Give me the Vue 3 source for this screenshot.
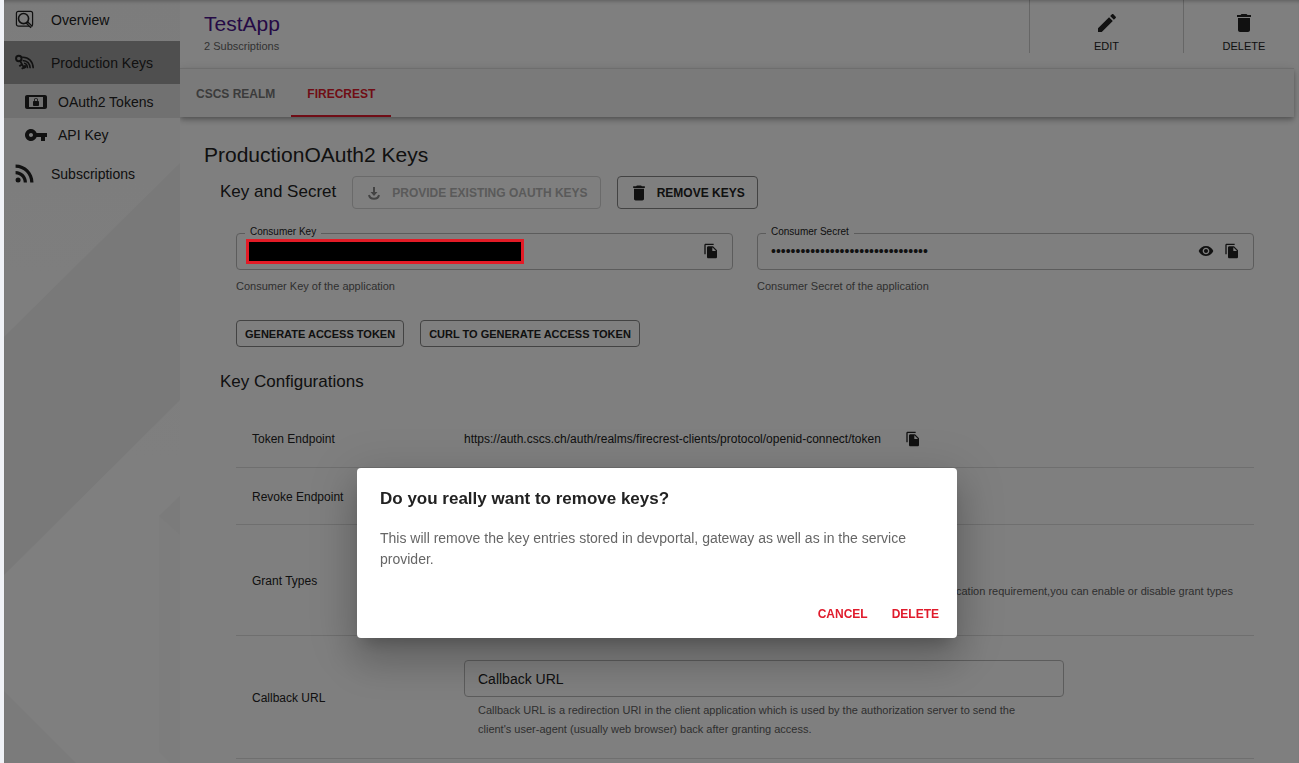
<script setup>
import { ref } from 'vue'

const secret = ref('x'.repeat(32))
const consumerKey = ref('')
const callback = ref('')

const copyPath =
  'M16 1H4c-1.100 0-2 .9-2 2v14h2V3h12V1zm-1 4l6 6v10c0 1.100-.9 2-2 2H7.990C6.890 23 6 22.100 6 21l.01-14c0-1.100.89-2 1.990-2h7zm-1 7h5.500L14 6.500V12z'
const trashPath = 'M6 19c0 1.100.9 2 2 2h8c1.100 0 2-.9 2-2V7H6v12zM19 4h-3.500l-1-1h-5l-1 1H5v2h14V4z'
</script>

<template>
  <div class="page">
    <aside class="sidebar">
      <svg class="pattern" width="176" height="763" viewBox="0 0 176 763" aria-hidden="true">
        <polygon points="176,163 0,337 0,575 176,400" fill="#f2f2f2" />
        <polygon points="176,496 155,516 155,752 176,772" fill="#fafafa" />
        <polygon points="176,496 155,516 176,535" fill="#f7f7f7" />
        <polygon points="0,691 72,763 0,763" fill="#f7f7f7" />
      </svg>
      <nav class="nav">
        <a href="#" class="item">
          <svg class="ico" viewBox="0 0 20 20" fill="none" stroke="#222">
            <rect x="1.500" y="1.500" width="17" height="15.500" rx="2" stroke-width="1.300" />
            <circle cx="9" cy="9" r="5.300" stroke-width="1.700" />
            <path d="M12.500 13l5 5" stroke-width="3.400" />
            <path d="M13.500 14l3.500 3.500" stroke="#ddd" stroke-width="1" />
          </svg>
          Overview
        </a>
        <a href="#" class="item selected">
          <svg class="ico" viewBox="0 0 20 20" fill="none" stroke="#222">
            <circle cx="4" cy="5.800" r="2.900" stroke-width="2" />
            <path d="M5.500 8.500L10 16.500M4.500 14l3.500-2.500M7 16.500l3.500-2" stroke-width="1.900" />
            <path d="M7.500 4.500C14.500 4.200 19 9 19.200 16M8 7.800c4.500.2 7.700 3.200 8 8.200" stroke-width="1.600" />
            <path d="M9.500 10.800c2 .2 3.500 2.200 3.700 5.200" stroke-width="1.600" />
            <circle cx="10.500" cy="14.300" r="1.700" fill="#222" stroke="none" />
          </svg>
          Production Keys
        </a>
        <a href="#" class="item sub active">
          <svg class="ico-lg" viewBox="1 1 22 22" fill="#222">
            <path d="M21 5H3c-1.100 0-2 .9-2 2v10c0 1.100.9 2 2 2h18c1.100 0 2-.9 2-2V7c0-1.100-.9-2-2-2zm-2 12H5V7h14v10zM10 16h4c.55 0 1-.45 1-1v-3c0-.55-.45-1-1-1v-1c0-1.110-.9-2-2-2s-2 .9-2 2v1c-.55 0-1 .45-1 1v3c0 .55.45 1 1 1zm.8-6c0-.66.54-1.200 1.200-1.200s1.200.54 1.200 1.200v1h-2.400v-1z" />
          </svg>
          OAuth2 Tokens
        </a>
        <a href="#" class="item sub">
          <svg class="ico-lg" viewBox="1 1 22 22" fill="#222">
            <path d="M12.650 10C11.830 7.670 9.610 6 7 6c-3.310 0-6 2.690-6 6s2.690 6 6 6c2.610 0 4.830-1.670 5.650-4H17v4h4v-4h2v-4H12.650zM7 14c-1.100 0-2-.9-2-2s.9-2 2-2 2 .9 2 2-.9 2-2 2z" />
          </svg>
          API Key
        </a>
        <a href="#" class="item">
          <svg class="ico" viewBox="3.500 4 16.500 16.500" fill="#222">
            <circle cx="6.180" cy="17.820" r="2.180" />
            <path d="M4 4.440v2.830c7.030 0 12.730 5.700 12.730 12.730h2.830c0-8.590-6.970-15.560-15.560-15.560zm0 5.660v2.830c3.900 0 7.070 3.170 7.070 7.070h2.830c0-5.470-4.430-9.900-9.900-9.900z" />
          </svg>
          Subscriptions
        </a>
      </nav>
    </aside>

    <main class="main">
      <header class="header">
        <div class="title">
          <a href="#" class="app-name">TestApp</a>
          <div class="count">2 Subscriptions</div>
        </div>
        <button type="button" class="action">
          <svg width="24" height="24" viewBox="0 0 24 24" fill="#222">
            <path d="M3 17.250V21h3.750L17.810 9.940l-3.750-3.750L3 17.250zM20.710 7.040c.39-.39.39-1.020 0-1.410l-2.340-2.340c-.39-.39-1.020-.39-1.410 0l-1.830 1.830 3.750 3.750 1.830-1.830z" />
          </svg>
          EDIT
        </button>
        <button type="button" class="action last">
          <svg width="24" height="24" viewBox="0 0 24 24" fill="#222"><path :d="trashPath" /></svg>
          DELETE
        </button>
      </header>

      <div class="tabs" role="tablist">
        <button type="button" role="tab" class="tab" aria-selected="false">CSCS REALM</button>
        <button type="button" role="tab" class="tab on" aria-selected="true">FIRECREST</button>
      </div>

      <section class="content">
        <h2>ProductionOAuth2 Keys</h2>
        <div class="section">
          <div class="section-head">
            <h3>Key and Secret</h3>
            <button type="button" class="btn" disabled>
              <svg width="20" height="20" viewBox="0 0 20 20" fill="none" stroke="#868686" stroke-width="2">
                <path d="M10 4v7M5 12c1 5 9 5 10 0" />
                <path d="M6.500 9h7L10 13z" fill="#868686" stroke="none" />
              </svg>
              PROVIDE EXISTING OAUTH KEYS
            </button>
            <button type="button" class="btn">
              <svg width="20" height="20" viewBox="0 0 24 24" fill="#222"><path :d="trashPath" /></svg>
              REMOVE KEYS
            </button>
          </div>

          <div class="fields">
            <div>
              <fieldset class="outlined">
                <legend><label for="ckey">Consumer Key</label></legend>
                <div class="field-row">
                  <input id="ckey" v-model="consumerKey" type="text" readonly />
                  <span class="redacted"></span>
                  <button type="button" class="icon-btn" aria-label="Copy key">
                    <svg width="16" height="16" viewBox="0 0 24 24" fill="#222"><path :d="copyPath" /></svg>
                  </button>
                </div>
              </fieldset>
              <p class="helper">Consumer Key of the application</p>
            </div>
            <div>
              <fieldset class="outlined">
                <legend><label for="csecret">Consumer Secret</label></legend>
                <div class="field-row">
                  <input id="csecret" v-model="secret" type="password" readonly />
                  <button type="button" class="icon-btn" aria-label="Show secret">
                    <svg width="16" height="16" viewBox="0 0 24 24" fill="#222">
                      <path d="M12 4.500C7 4.500 2.730 7.610 1 12c1.730 4.390 6 7.500 11 7.500s9.270-3.110 11-7.500c-1.730-4.390-6-7.500-11-7.500zM12 17c-2.760 0-5-2.240-5-5s2.240-5 5-5 5 2.240 5 5-2.240 5-5 5zm0-8c-1.660 0-3 1.340-3 3s1.340 3 3 3 3-1.340 3-3-1.340-3-3-3z" />
                    </svg>
                  </button>
                  <button type="button" class="icon-btn" aria-label="Copy secret">
                    <svg width="16" height="16" viewBox="0 0 24 24" fill="#222"><path :d="copyPath" /></svg>
                  </button>
                </div>
              </fieldset>
              <p class="helper">Consumer Secret of the application</p>
            </div>
          </div>

          <div class="token-actions">
            <button type="button" class="btn small">GENERATE ACCESS TOKEN</button>
            <button type="button" class="btn small">CURL TO GENERATE ACCESS TOKEN</button>
          </div>

          <h3 class="config-title">Key Configurations</h3>
          <table class="config">
            <tbody>
              <tr>
                <th scope="row">Token Endpoint</th>
                <td>
                  <div class="endpoint">
                    https://auth.cscs.ch/auth/realms/firecrest-clients/protocol/openid-connect/token
                    <button type="button" class="icon-btn" aria-label="Copy endpoint">
                      <svg width="16" height="16" viewBox="0 0 24 24" fill="#222"><path :d="copyPath" /></svg>
                    </button>
                  </div>
                </td>
              </tr>
              <tr>
                <th scope="row">Revoke Endpoint</th>
                <td></td>
              </tr>
              <tr class="grants">
                <th scope="row">Grant Types</th>
                <td>
                  <p class="note">Based on the application requirement,you can enable or disable grant types</p>
                </td>
              </tr>
              <tr class="callback">
                <th scope="row"><label for="callback">Callback URL</label></th>
                <td>
                  <input id="callback" v-model="callback" class="callback-input" type="text" placeholder="Callback URL" />
                  <p class="callback-help">
                    Callback URL is a redirection URI in the client application which is used by the authorization
                    server to send the client's user-agent (usually web browser) back after granting access.
                  </p>
                </td>
              </tr>
            </tbody>
          </table>
        </div>
      </section>
    </main>

    <div class="backdrop"></div>
    <div class="dialog-layer">
      <div class="dialog" role="dialog" aria-modal="true" aria-labelledby="dlg-title">
        <h2 id="dlg-title">Do you really want to remove keys?</h2>
        <p>
          This will remove the key entries stored in devportal, gateway as well as in the service provider.
        </p>
        <div class="dialog-actions">
          <button type="button">CANCEL</button>
          <button type="button">DELETE</button>
        </div>
      </div>
    </div>
  </div>
</template>

<style>
body {
  background: #f0f2f7;
  overflow: hidden;
}
</style>

<style scoped>
* {
  box-sizing: border-box;
}
.page {
  display: flex;
  height: 100vh;
  padding-left: 4px;
  overflow: hidden;
  font-family: 'Liberation Sans', Arial, sans-serif;
  color: #222;
}
button,
input {
  font-family: inherit;
  color: inherit;
}
button {
  background: none;
  border: 0;
  padding: 0;
}
h2,
h3,
p {
  margin: 0;
  font-weight: 400;
}
.sidebar {
  position: relative;
  flex: 0 0 176px;
  background: linear-gradient(#f9f9f9, #fefefe 60%);
}
.pattern {
  position: absolute;
  top: 0;
  left: 0;
}
.nav {
  position: relative;
  display: flex;
  flex-direction: column;
}
.item {
  display: flex;
  align-items: center;
  gap: 17px;
  height: 43px;
  padding-left: 11px;
  font-size: 14px;
  color: #222;
  text-decoration: none;
}
.item:first-child {
  height: 41px;
  padding-bottom: 2px;
}
.item.selected {
  background: #9e9e9e;
}
.item.sub {
  height: 34px;
  padding-left: 21px;
  gap: 11px;
}
.item.active {
  padding-top: 1px;
  background: #e2e2e2;
}
.ico {
  width: 19px;
  height: 19px;
}
.ico-lg {
  width: 22px;
  height: 22px;
}
.main {
  flex: 1;
  min-width: 0;
  background: #fff;
}
.header {
  display: flex;
  height: 68px;
}
.title {
  flex: 1;
  padding: 12px 24px 0;
}
.app-name {
  display: block;
  font-size: 21px;
  line-height: 24px;
  color: #4a148c;
  text-decoration: none;
}
.count {
  margin-top: 3px;
  font-size: 11px;
  line-height: 14px;
  color: #666;
}
.action {
  display: flex;
  flex-direction: column;
  align-items: center;
  gap: 4px;
  width: 154px;
  height: 53px;
  padding-top: 11px;
  border-left: 1px solid #ccc;
  font-size: 11px;
  line-height: 14px;
}
.action.last {
  width: 116px;
  padding-left: 5px;
}
.tabs {
  display: flex;
  height: 49px;
  margin-right: 5px;
  border-top: 1px solid #dcdcdc;
  background: #f5f5f5;
  box-shadow: 0 2px 4px -1px rgba(0, 0, 0, 0.2), 0 4px 5px 0 rgba(0, 0, 0, 0.14), 0 1px 10px 0 rgba(0, 0, 0, 0.12);
}
.tab {
  padding: 4px 16px 0;
  font-size: 12px;
  font-weight: 700;
  color: #777;
  border-bottom: 2px solid transparent;
}
.tab.on {
  color: #e01b2c;
  border-bottom-color: #e01b2c;
}
.content {
  padding: 25px 45px 0 24px;
}
.content h2 {
  font-size: 21px;
  line-height: 26px;
}
h3 {
  font-size: 17px;
  line-height: 22px;
}
.section {
  padding: 8px 0 0 16px;
}
.section-head {
  display: flex;
  gap: 16px;
}
.section-head h3 {
  line-height: 31px;
}
.btn {
  display: flex;
  align-items: center;
  gap: 8px;
  height: 33px;
  padding: 0 12px 0 11px;
  border: 1px solid #868686;
  border-radius: 4px;
  font-size: 12px;
  font-weight: 700;
}
.btn:disabled {
  color: #b4b4b4;
  border-color: #d4d4d4;
}
.btn.small {
  height: 27px;
  padding: 0 8px;
  font-size: 11px;
}
.fields {
  display: grid;
  grid-template-columns: 1fr 1fr;
  gap: 24px;
  margin: 17px 0 0 16px;
}
.outlined {
  min-width: 0;
  margin: 0;
  padding: 0 13px 0 8px;
  border: 1px solid #b9b9b9;
  border-radius: 4px;
}
legend {
  padding: 0 5px 4px;
  font-size: 10px;
  line-height: 11px;
}
.field-row {
  position: relative;
  display: flex;
  align-items: center;
  gap: 10px;
  height: 28px;
  padding-left: 5px;
  padding-bottom: 8px;
}
.field-row input {
  flex: 1;
  min-width: 0;
  height: 20px;
  padding: 0;
  border: 0;
  outline: 0;
  background: none;
  font-size: 14px;
}
.icon-btn {
  display: flex;
}
.redacted {
  position: absolute;
  z-index: 20;
  top: -2px;
  left: 1px;
  width: 278px;
  height: 25px;
  background: #000;
  border: 3px solid #e31b26;
}
.helper {
  margin-top: 9px;
  font-size: 11px;
  line-height: 14px;
  color: #606060;
}
.token-actions {
  display: flex;
  gap: 16px;
  margin: 27px 0 0 16px;
}
.config-title {
  margin-top: 24px;
}
.config {
  width: calc(100% - 16px);
  margin: 17px 0 0 16px;
  border-collapse: collapse;
  font-size: 12px;
}
.config tr {
  height: 57px;
  border-bottom: 1px solid #dedede;
}
.config th {
  width: 212px;
  padding: 2px 0 0 16px;
  font-weight: 400;
  text-align: left;
}
.config td {
  padding: 2px 16px 0;
}
.endpoint {
  display: flex;
  align-items: center;
  gap: 24px;
}
.config .grants {
  height: 111px;
}
.note {
  padding: 22px 5px 0 0;
  font-size: 11px;
  line-height: 19px;
  text-align: right;
  color: #606060;
}
.config .callback {
  height: 123px;
}
.config .callback td {
  padding-top: 6px;
}
.callback-input {
  display: block;
  width: 600px;
  max-width: 100%;
  height: 37px;
  padding: 0 13px;
  border: 1px solid #b9b9b9;
  border-radius: 4px;
  background: none;
  font-size: 14px;
}
.callback-input::placeholder {
  color: #222;
  opacity: 1;
}
.callback-help {
  max-width: 600px;
  margin-top: 4px;
  padding: 0 14px;
  font-size: 11px;
  line-height: 19px;
  color: #606060;
}
.backdrop {
  position: fixed;
  inset: 0 0 0 4px;
  z-index: 10;
  background: rgba(0, 0, 0, 0.5);
  box-shadow: inset 0 4px 4px -3px rgba(0, 0, 0, 0.3);
}
.dialog-layer {
  position: fixed;
  inset: 0 0 0 4px;
  z-index: 30;
  display: flex;
  align-items: center;
  justify-content: center;
  padding: 343px 0 0 11px;
}
.dialog {
  width: 600px;
  padding: 19px 18px 12px 23px;
  border-radius: 4px;
  background: #fff;
  box-shadow: 0 11px 15px -7px rgba(0, 0, 0, 0.2), 0 24px 38px 3px rgba(0, 0, 0, 0.14),
    0 9px 46px 8px rgba(0, 0, 0, 0.12);
}
.dialog h2 {
  font-size: 17px;
  line-height: 24px;
  font-weight: 700;
}
.dialog p {
  margin-top: 17px;
  padding-right: 24px;
  font-size: 14px;
  line-height: 21px;
  color: #666;
}
.dialog-actions {
  display: flex;
  justify-content: flex-end;
  gap: 24px;
  margin-top: 32px;
}
.dialog-actions button {
  height: 24px;
  font-size: 12px;
  font-weight: 700;
  color: #e01b2c;
}
</style>
